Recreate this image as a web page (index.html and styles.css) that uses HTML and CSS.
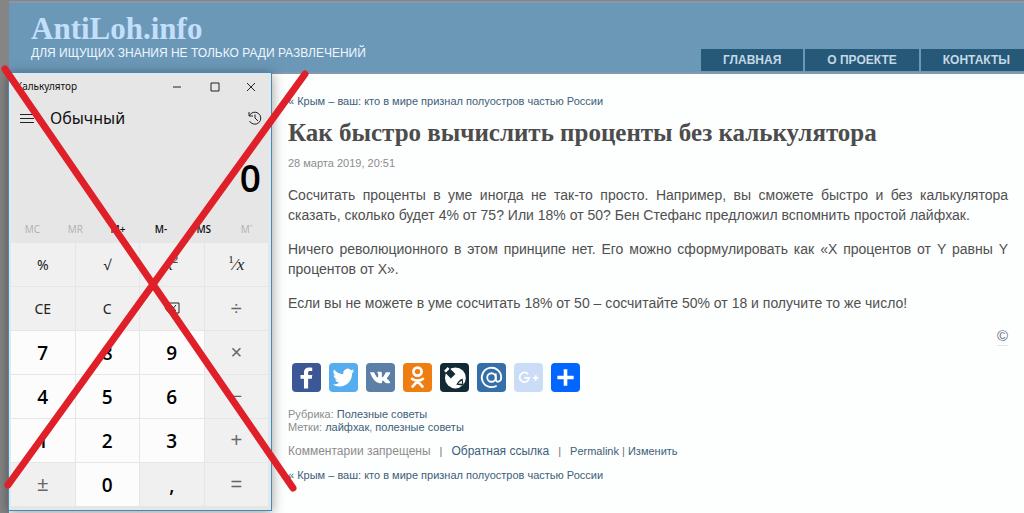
FILE: index.html
```html
<!DOCTYPE html>
<html lang="ru">
<head>
<meta charset="utf-8">
<title>Как быстро вычислить проценты без калькулятора</title>
<link rel="stylesheet" href="styles.css">
</head>
<body>
<div class="page">
  <header class="site-header">
    <div class="brand">
      <a class="site-name" href="#">AntiLoh.info</a>
      <p class="tagline">ДЛЯ ИЩУЩИХ ЗНАНИЯ НЕ ТОЛЬКО РАДИ РАЗВЛЕЧЕНИЙ</p>
    </div>
    <nav class="menu">
      <a href="#">ГЛАВНАЯ</a>
      <a href="#">О ПРОЕКТЕ</a>
      <a href="#">КОНТАКТЫ</a>
    </nav>
  </header>
  <main class="article">
    <a class="prev" href="#">« Крым – ваш: кто в мире признал полуостров частью России</a>
    <h1>Как быстро вычислить проценты без калькулятора</h1>
    <p class="date">28 марта 2019, 20:51</p>
    <div class="text">
      <p>Сосчитать проценты в уме иногда не так-то просто. Например, вы сможете быстро и без калькулятора сказать, сколько будет 4% от 75? Или 18% от 50? Бен Стефанс предложил вспомнить простой лайфхак.</p>
      <p>Ничего революционного в этом принципе нет. Его можно сформулировать как «X процентов от Y равны Y процентов от X».</p>
      <p>Если вы не можете в уме сосчитать 18% от 50 – сосчитайте 50% от 18 и получите то же число!</p>
    </div>
    <a class="copy" href="#">©</a>
    <div class="share">
      <a class="fb" href="#" aria-label="Facebook"><svg viewBox="0 0 32 32"><path d="M17.800 28V17.500h4l.6-4.200h-4.600v-2.500c0-1.200.4-1.900 2-1.900h2.500V5.200c-.4 0-1.900-.2-3.500-.2-3.500 0-5.600 1.900-5.600 5.500v2.800H9.400v4.200h3.800V28z"/></svg></a>
      <a class="tw" href="#" aria-label="Twitter"><svg viewBox="0 0 32 32"><path d="M28 8.600a9.900 9.900 0 0 1-2.800.8 4.930 4.930 0 0 0 2.200-2.700c-1 .5-2 1-3.100 1.200a4.920 4.920 0 0 0-8.400 4.500A14 14 0 0 1 5.700 7.200a4.900 4.900 0 0 0 1.500 6.600 5 5 0 0 1-2.200-.6v.1c0 2.400 1.700 4.400 4 4.800a5 5 0 0 1-2.200.1 4.930 4.930 0 0 0 4.600 3.400A9.900 9.900 0 0 1 4 23.600a13.900 13.900 0 0 0 7.500 2.200c9.100 0 14.300-7.700 14-14.600A10 10 0 0 0 28 8.600z"/></svg></a>
      <a class="vk" href="#" aria-label="ВКонтакте"><svg viewBox="-2 -2 36 36"><path d="M15.600 23h1.400s.4 0 .7-.3c.2-.2.2-.7.2-.7s0-2 .9-2.300c.9-.3 2.100 2 3.300 2.800.9.600 1.600.5 1.600.5h3.300s1.700-.1.900-1.400c-.1-.2-.5-1-2.500-2.900-2.100-2-1.800-1.600.7-5 1.500-2 2.200-3.300 2-3.800-.2-.5-1.400-.4-1.400-.4h-3.700s-.3 0-.5.1c-.2.100-.3.400-.3.400s-.6 1.600-1.400 2.900c-1.600 2.800-2.300 3-2.600 2.800-.6-.4-.5-1.600-.5-2.500 0-2.700.4-3.800-.8-4.100-.4-.1-.7-.2-1.700-.2-1.300 0-2.400 0-3 .3-.4.200-.8.700-.6.700.3 0 .8.200 1.100.6.400.5.400 1.700.4 1.700s.2 3.300-.5 3.700c-.5.300-1.300-.3-2.800-3-.8-1.300-1.400-2.800-1.400-2.800S8.300 9.800 8 9.700c-.3-.2-.6-.2-.6-.2H3.900s-.5 0-.7.2c-.2.200 0 .6 0 .6s2.700 6.400 5.800 9.700c2.900 3 6.600 3 6.600 3z"/></svg></a>
      <a class="ok" href="#" aria-label="Одноклассники"><svg viewBox="0 0 32 32" class="line"><circle cx="16" cy="9.500" r="4.500"/><path d="M10 17.500q6 4 12 0M16 20l-5.500 6M16 20l5.500 6"/></svg></a>
      <a class="lj" href="#" aria-label="LiveJournal"><svg viewBox="0 0 32 32"><circle cx="17" cy="16.500" r="11.500"/><path class="dark" d="M3 8l5-5 9 9-5 5z"/><path d="M4.500 8.500l4-4 2 2-4 4z"/><path class="dark" d="M25 17l1 8-8-1q2-5 7-7z"/><path d="M20 22.500q1.500-2 4-3l.5 3.500z"/></svg></a>
      <a class="mail" href="#" aria-label="Mail.Ru"><svg viewBox="0 0 32 32" class="ring"><circle cx="16" cy="16" r="4.700"/><path d="M20.700 11.500v6.200c0 4.500 6 3.500 6-1.700a10.700 10.700 0 1 0-5 9"/></svg></a>
      <a class="gp" href="#" aria-label="Google+"><svg viewBox="0 0 32 32" class="plus"><path d="M15.500 12.200A5.300 5.300 0 1 0 16.800 16.500h-5.300M24 13.500v6M21 16.500h6"/></svg></a>
      <a class="more" href="#" aria-label="Ещё"><svg viewBox="0 0 32 32"><path d="M14 7h4v7h7v4h-7v7h-4v-7H7v-4h7z"/></svg></a>
    </div>
    <p class="meta">Рубрика: <a href="#">Полезные советы</a><br>Метки: <a href="#">лайфхак</a>, <a href="#">полезные советы</a></p>
    <p class="actions"><span class="closed">Комментарии запрещены</span><span>|</span><a class="track" href="#">Обратная ссылка</a><span>|</span><span><a href="#">Permalink</a> | <a href="#">Изменить</a></span></p>
    <a class="prev" href="#">« Крым – ваш: кто в мире признал полуостров частью России</a>
  </main>
</div>

<section class="calc" aria-label="Калькулятор">
  <div class="titlebar">
    <span class="title">Калькулятор</span>
    <button aria-label="Свернуть"><svg viewBox="0 0 10 10"><path d="M1 5h8"/></svg></button>
    <button aria-label="Развернуть"><svg viewBox="0 0 10 10"><path d="M1 1h8v8H1z"/></svg></button>
    <button aria-label="Закрыть"><svg viewBox="0 0 10 10"><path d="M1 1l8 8M9 1L1 9"/></svg></button>
  </div>
  <div class="mode">
    <button aria-label="Меню"><svg viewBox="0 0 14 14"><path d="M0 3.500h14M0 7.500h14M0 11.500h14"/></svg></button>
    <span class="mode-name">Обычный</span>
    <button aria-label="Журнал"><svg viewBox="0 0 14 14"><path d="M1 1v4h4M1.300 4.800A6 6 0 1 1 1.500 10M7 3.500V7l3 3"/></svg></button>
  </div>
  <output class="display">0</output>
  <div class="memory">
    <button disabled>MC</button><button disabled>MR</button><button>M+</button><button>M-</button><button>MS</button><button disabled>M˅</button>
  </div>
  <div class="keys">
    <button>%</button><button>√</button><button class="math">x<sup>2</sup></button><button class="math"><sup>1</sup>⁄x</button>
    <button>CE</button><button>C</button><button aria-label="Стереть"><svg viewBox="0 0 16 12"><path d="M5 1h10v10H5L1 6zM7 3l5 6M12 3L7 9"/></svg></button><button class="op">÷</button>
    <button class="num">7</button><button class="num">8</button><button class="num">9</button><button class="op">×</button>
    <button class="num">4</button><button class="num">5</button><button class="num">6</button><button class="op">−</button>
    <button class="num">1</button><button class="num">2</button><button class="num">3</button><button class="op">+</button>
    <button class="op">±</button><button class="num">0</button><button class="comma">,</button><button class="op">=</button>
  </div>
</section>

<svg class="cross" viewBox="0 0 310 513" aria-hidden="true"><path d="M5 69L293 488M305 74L8 485"/></svg>
</body>
</html>
```
FILE: styles.css
```css
* { box-sizing: border-box; }
body {
  margin: 0;
  padding: 1px 0 0 9px;
  min-height: 100vh;
  display: flex;
  background: #858585;
  font-family: "Liberation Sans", Arial, sans-serif;
  color: #505050;
  overflow: hidden;
}
p, h1 { margin: 0; }
a { color: #3c6078; text-decoration: none; }
button { border: 0; padding: 0; background: none; font: inherit; color: inherit; }

.page { flex: 1; background: #fdfefe; }
.site-header {
  display: flex;
  justify-content: space-between;
  align-items: flex-end;
  height: 73px;
  padding-left: 22px;
  background: #6c98b8;
  border-top: 2px solid #8798a8;
  border-bottom: 2px solid #8299ae;
}
.brand { align-self: flex-start; padding-top: 8px; }
.site-name {
  display: block;
  font: bold 31px/35px "Liberation Serif", "Times New Roman", serif;
  color: #c3dffb;
}
.tagline { font-size: 12px; line-height: 14px; color: #eef7ff; }
.menu { display: flex; gap: 2px; padding-bottom: 1px; }
.menu a {
  padding: 0 22px;
  font-size: 12px;
  font-weight: bold;
  line-height: 22px;
  background: #265878;
  color: #c4d8e6;
}
.menu a:last-child { padding-right: 14px; }

.article {
  display: flex;
  flex-direction: column;
  align-items: flex-start;
  padding: 19px 16px 0 279px;
}
.prev { font-size: 11px; line-height: 16px; }
h1 {
  margin-top: 8px;
  font: bold 25px/32px "Liberation Serif", "Times New Roman", serif;
  color: #4c4c4c;
}
.date { margin-top: 6px; font-size: 11px; line-height: 16px; color: #8c8c8c; }
.text {
  display: flex;
  flex-direction: column;
  gap: 14px;
  margin-top: 14px;
  font-size: 14px;
  line-height: 20px;
  text-align: justify;
}
.copy {
  align-self: flex-end;
  margin-top: 14px;
  font-size: 15px;
  line-height: 18px;
  color: #5c6c78;
  border-bottom: 1px solid #e2e6e8;
}
.share { display: flex; gap: 8px; margin: 17px 0 0 4px; }
.share a { width: 29px; height: 29px; border-radius: 4px; }
.share svg { display: block; width: 29px; height: 29px; fill: #fff; }
.share .line { fill: none; stroke: #fff; stroke-width: 3; stroke-linecap: round; }
.share .ring { fill: none; stroke: #fff; stroke-width: 2; }
.share .plus { fill: none; stroke: #fff; stroke-width: 2; }
.fb { background: #3b5795; }
.tw { background: #55acee; }
.vk { background: #5b7fa6; }
.ok { background: #ee7d12; }
.lj { background: #122a34; }
.share .dark { fill: #122a34; }
.mail { background: #356fa9; }
.gp { background: #cbdcf7; }
.more { background: #0166ff; }
.meta { margin-top: 16px; font-size: 11px; line-height: 13px; color: #8c8c8c; }
.actions {
  display: flex;
  align-items: baseline;
  gap: 9px;
  margin-top: 9px;
  font-size: 11px;
  line-height: 16px;
  color: #707070;
}
.closed { color: #8c8c8c; }
.closed, .track { font-size: 12px; }
.actions + .prev { margin-top: 8px; }

.calc {
  position: absolute;
  left: 8px;
  top: 72px;
  width: 264px;
  padding: 0 3px 4px 2px;
  background: #e6e6e6;
  border: 1px solid #3f8dbd;
  box-shadow: 0 2px 12px rgba(0, 0, 0, .4);
  font-family: "Noto Sans", "Open Sans", sans-serif;
  color: #111;
}
.calc svg { fill: none; stroke: #222; }
.titlebar { display: flex; align-items: center; height: 25px; padding-left: 5px; }
.title { flex: 1; font-size: 10px; }
.titlebar button { width: 38px; height: 25px; }
.titlebar button:last-child { width: 34px; }
.titlebar svg { width: 10px; height: 10px; }
.mode { display: flex; align-items: center; height: 40px; padding: 0 6px 0 9px; }
.mode svg { display: block; width: 14px; height: 14px; }
.mode-name { flex: 1; padding-left: 16px; font-size: 16px; }
.display {
  display: block;
  height: 76px;
  padding-right: 7px;
  text-align: right;
  font-family: "Open Sans", "Noto Sans", sans-serif;
  font-size: 37px;
  font-weight: 600;
  line-height: 80px;
  color: #000;
}
.memory {
  display: grid;
  grid-template-columns: repeat(6, 1fr);
  height: 29px;
  font-family: "Open Sans", "Noto Sans", sans-serif;
  font-size: 10px;
  font-weight: 600;
}
.memory button:disabled { color: #b0b0b0; font-weight: 400; }
.keys {
  display: grid;
  grid-template-columns: repeat(4, 1fr);
  grid-auto-rows: 43px;
  gap: 1px;
  background: #e6e6e6;
}
.keys button { background: #f0f0f0; font-size: 14px; color: #222; }
.keys .num, .keys .comma {
  font-family: "Open Sans", "Noto Sans", sans-serif;
  font-size: 19px;
  font-weight: 600;
  color: #000;
}
.keys .num { background: #fcfcfc; }
.keys .op {
  font-family: "Liberation Sans", Arial, sans-serif;
  font-size: 20px;
  color: #666;
}
.keys .math { font-family: "Liberation Serif", serif; font-style: italic; font-size: 17px; }
.keys sup { font-size: 11px; font-style: normal; line-height: 1; }
.keys svg { width: 16px; height: 12px; }

.cross {
  position: absolute;
  left: 0;
  top: 0;
  width: 310px;
  height: 513px;
  fill: none;
  stroke: #df2029;
  stroke-width: 7;
  stroke-linecap: round;
  pointer-events: none;
}
```
